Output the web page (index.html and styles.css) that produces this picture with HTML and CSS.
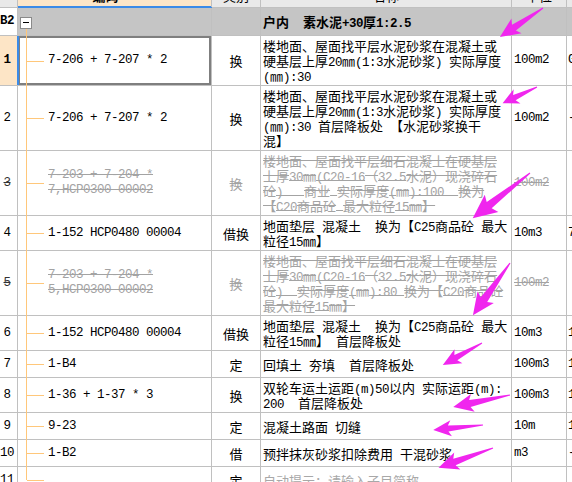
FILE: index.html
```html
<!DOCTYPE html>
<html lang="zh-CN">
<head>
<meta charset="utf-8">
<title>子目列表</title>
<link rel="stylesheet" href="styles.css">
</head>
<body>
<div class="sheet">
  <div class="row head">
    <div class="c num"></div>
    <div class="c code hsel"><div class="t hb">编码</div></div>
    <div class="c type"><div class="t">类别</div></div>
    <div class="c name ctr"><div class="t">名称</div></div>
    <div class="c unit ctr"><div class="t">单位</div></div>
    <div class="c more"></div>
  </div>

  <div class="row grp">
    <div class="c num"><div class="t m b">B2</div></div>
    <div class="c code gcode"><span class="box"></span></div>
    <div class="c type"></div>
    <div class="c name"><div class="t b">户内<span class="a">  </span>素水泥<span class="a">+30</span>厚<span class="a">1:2.5</span></div></div>
    <div class="c unit"></div>
    <div class="c more"></div>
  </div>

  <div class="row">
    <div class="c num selrow"><div class="t m b">1</div></div>
    <div class="c code tree sel"><div class="t m">7-206 + 7-207 * 2</div></div>
    <div class="c type"><div class="t">换</div></div>
    <div class="c name"><div class="t">楼地面、屋面找平层水泥砂浆在混凝土或<br>硬基层上厚<span class="a">20</span>㎜<span class="a">(1:3</span>水泥砂浆<span class="a">) </span>实际厚度<br><span class="a">(</span>㎜<span class="a">):30</span></div></div>
    <div class="c unit"><div class="t m">100m2</div></div>
    <div class="c more"><div class="t m">G</div></div>
  </div>

  <div class="row">
    <div class="c num"><div class="t m">2</div></div>
    <div class="c code tree"><div class="t m">7-206 + 7-207 * 2</div></div>
    <div class="c type"><div class="t">换</div></div>
    <div class="c name"><div class="t">楼地面、屋面找平层水泥砂浆在混凝土或<br>硬基层上厚<span class="a">20</span>㎜<span class="a">(1:3</span>水泥砂浆<span class="a">) </span>实际厚度<br><span class="a">(</span>㎜<span class="a">):30 </span>首层降板处<span class="a"> </span>【水泥砂浆换干<br>混】</div></div>
    <div class="c unit"><div class="t m">100m2</div></div>
    <div class="c more"><div class="t m">-</div></div>
  </div>

  <div class="row">
    <div class="c num"><div class="t m xn">3</div></div>
    <div class="c code tree"><div class="t m x">7-203 + 7-204 *<br>7,HCP0300 00002</div></div>
    <div class="c type"><div class="t x">换</div></div>
    <div class="c name"><div class="t x">楼地面、屋面找平层细石混凝土在硬基层<br>上厚<span class="a">30</span>㎜<span class="a">(C20-16</span>（<span class="a">32.5</span>水泥）现浇碎石<br>砼<span class="a">)   </span>商业<span class="a"> </span>实际厚度<span class="a">(</span>㎜<span class="a">):100  </span>换为<br>【<span class="a">C20</span>商品砼<span class="a"> </span>最大粒径<span class="a">15</span>㎜】</div></div>
    <div class="c unit"><div class="t m x">100m2</div></div>
    <div class="c more"></div>
  </div>

  <div class="row">
    <div class="c num"><div class="t m">4</div></div>
    <div class="c code tree"><div class="t m">1-152 HCP0480 00004</div></div>
    <div class="c type"><div class="t">借换</div></div>
    <div class="c name"><div class="t">地面垫层<span class="a"> </span>混凝土<span class="a">  </span>换为【<span class="a">C25</span>商品砼<span class="a"> </span>最大<br>粒径<span class="a">15</span>㎜】</div></div>
    <div class="c unit"><div class="t m">10m3</div></div>
    <div class="c more"><div class="t m">7</div></div>
  </div>

  <div class="row">
    <div class="c num"><div class="t m xn">5</div></div>
    <div class="c code tree"><div class="t m x">7-203 + 7-204 *<br>5,HCP0300 00002</div></div>
    <div class="c type"><div class="t x">换</div></div>
    <div class="c name"><div class="t x">楼地面、屋面找平层细石混凝土在硬基层<br>上厚<span class="a">30</span>㎜<span class="a">(C20-16</span>（<span class="a">32.5</span>水泥）现浇碎石<br>砼<span class="a">)  </span>实际厚度<span class="a">(</span>㎜<span class="a">):80 </span>换为【<span class="a">C20</span>商品砼<br>最大粒径<span class="a">15</span>㎜】</div></div>
    <div class="c unit"><div class="t m x">100m2</div></div>
    <div class="c more"></div>
  </div>

  <div class="row">
    <div class="c num"><div class="t m">6</div></div>
    <div class="c code tree"><div class="t m">1-152 HCP0480 00004</div></div>
    <div class="c type"><div class="t">借换</div></div>
    <div class="c name"><div class="t">地面垫层<span class="a"> </span>混凝土<span class="a">  </span>换为【<span class="a">C25</span>商品砼<span class="a"> </span>最大<br>粒径<span class="a">15</span>㎜】<span class="a"> </span>首层降板处</div></div>
    <div class="c unit"><div class="t m">10m3</div></div>
    <div class="c more"><div class="t m">1</div></div>
  </div>

  <div class="row">
    <div class="c num"><div class="t m">7</div></div>
    <div class="c code tree"><div class="t m">1-B4</div></div>
    <div class="c type"><div class="t">定</div></div>
    <div class="c name"><div class="t">回填土<span class="a"> </span>夯填<span class="a">  </span>首层降板处</div></div>
    <div class="c unit"><div class="t m">100m3</div></div>
    <div class="c more"><div class="t m">1</div></div>
  </div>

  <div class="row">
    <div class="c num"><div class="t m">8</div></div>
    <div class="c code tree"><div class="t m">1-36 + 1-37 * 3</div></div>
    <div class="c type"><div class="t">换</div></div>
    <div class="c name"><div class="t">双轮车运土运距<span class="a">(m)50</span>以内<span class="a"> </span>实际运距<span class="a">(m):</span><br><span class="a">200  </span>首层降板处</div></div>
    <div class="c unit"><div class="t m">100m3</div></div>
    <div class="c more"><div class="t m">1</div></div>
  </div>

  <div class="row">
    <div class="c num"><div class="t m">9</div></div>
    <div class="c code tree"><div class="t m">9-23</div></div>
    <div class="c type"><div class="t">定</div></div>
    <div class="c name"><div class="t">混凝土路面<span class="a"> </span>切缝</div></div>
    <div class="c unit"><div class="t m">10m</div></div>
    <div class="c more"><div class="t m">1</div></div>
  </div>

  <div class="row">
    <div class="c num"><div class="t m">10</div></div>
    <div class="c code tree"><div class="t m">1-B2</div></div>
    <div class="c type"><div class="t">借</div></div>
    <div class="c name"><div class="t">预拌抹灰砂浆扣除费用<span class="a"> </span>干混砂浆</div></div>
    <div class="c unit"><div class="t m">m3</div></div>
    <div class="c more"><div class="t m">-</div></div>
  </div>

  <div class="row">
    <div class="c num"><div class="t m">11</div></div>
    <div class="c code tree last"><div class="t m"></div></div>
    <div class="c type"><div class="t">定</div></div>
    <div class="c name"><div class="t hint">自动提示：请输入子目简称</div></div>
    <div class="c unit"></div>
    <div class="c more"></div>
  </div>
</div>

<svg class="marks" width="572" height="482" viewBox="0 0 572 482" aria-hidden="true">
  <g fill="#f026ee">
    <polygon transform="translate(543 8) rotate(146)" points="0,-0.6 35,-3.5 32,-9 52,0 32,9 35,3.5 0,0.6"/>
    <polygon transform="translate(537 87) rotate(154.8)" points="0,-0.5 25,-3 22,-8 38,0 22,8 25,3 0,0.5"/>
    <polygon transform="translate(530 173) rotate(141.7)" points="0,-0.6 52,-4 49,-11 73,0 49,11 52,4 0,0.6"/>
    <polygon transform="translate(510 263) rotate(125.4)" points="0,-0.6 45,-4 42,-10 64,0 42,10 45,4 0,0.6"/>
    <polygon transform="translate(482 343) rotate(150.6)" points="0,-0.5 30,-3 27,-8 45,0 27,8 30,3 0,0.5"/>
    <polygon transform="translate(510 395) rotate(168.1)" points="0,-0.6 41,-3.5 38,-9 58,0 38,9 41,3.5 0,0.6"/>
    <polygon transform="translate(483 425) rotate(174.3)" points="0,-0.5 35,-3 32,-8 50,0 32,8 35,3 0,0.5"/>
    <polygon transform="translate(493 448) rotate(160)" points="0,-0.6 41,-3.5 38,-9 58,0 38,9 41,3.5 0,0.6"/>
  </g>
</svg>
</body>
</html>
```

FILE: styles.css
```css
html, body {
  margin: 0;
  padding: 0;
  background: #ffffff;
}

body {
  width: 572px;
  height: 482px;
  overflow: hidden;
  position: relative;
  font-family: "Noto Sans CJK SC", "Noto Sans", sans-serif;
  font-size: 13px;
  line-height: 15px;
  color: #000000;
}

.sheet {
  margin-top: -17px;
  width: 600px;
}

.row {
  display: flex;
  box-sizing: border-box;
  min-height: 27px;
  border-bottom: 1px solid #c0c0c0;
}

.c {
  box-sizing: border-box;
  flex: none;
  display: flex;
  align-items: center;
  padding: 2px 0;
  border-right: 1px solid #c0c0c0;
}

.num {
  width: 18px;
  justify-content: center;
  padding-right: 3px;
}

.code {
  width: 194px;
  padding-left: 30px;
  position: relative;
}

.type {
  width: 49px;
  justify-content: center;
}

.name {
  width: 251px;
  padding-left: 2px;
}

.unit {
  width: 55px;
  padding-left: 2px;
}

.more {
  flex: 1;
  padding-left: 1px;
  border-right: 0;
}

.ctr {
  justify-content: center;
  padding-left: 0;
}

.t {
  white-space: pre;
}

.m {
  font-family: "Liberation Mono", "DejaVu Sans Mono", monospace;
  font-size: 12.5px;
  letter-spacing: -0.5px;
}

.a {
  font-family: "Liberation Mono", "DejaVu Sans Mono", monospace;
  font-size: 12.5px;
  letter-spacing: -0.5px;
  line-height: 10px;
}

.b {
  font-weight: bold;
}

/* header */
.head {
  min-height: 25px;
  background: #e9e9e9;
}

.head .c {
  padding: 0;
}

.head .code {
  padding-left: 0;
  justify-content: center;
}

.hsel {
  background: #fde6c8;
  box-shadow: inset 0 -1px 0 #3b8be8, 0 1px 0 #3b8be8;
}

.hb {
  font-weight: bold;
  padding-right: 18px;
}

/* group row */
.grp {
  min-height: 28px;
}

.grp .c {
  background: #c5c5c5;
}

.grp .num {
  background: #ffffff;
}

.gcode {
  padding-left: 2px;
}

.gcode::before {
  content: "";
  position: absolute;
  left: 8px;
  top: 21px;
  bottom: -1px;
  width: 1px;
  background: #ffc77a;
}

.box {
  position: relative;
  box-sizing: border-box;
  width: 12px;
  height: 12px;
  margin-top: 2px;
  border: 1px solid #8a8a8a;
  background: #ffffff;
}

.box::after {
  content: "";
  position: absolute;
  left: 2px;
  top: 4px;
  width: 6px;
  height: 1px;
  background: #000000;
}

/* tree lines */
.tree::before {
  content: "";
  position: absolute;
  left: 8px;
  top: -1px;
  bottom: -1px;
  width: 1px;
  background: #ffc77a;
}

.tree::after {
  content: "";
  position: absolute;
  left: 9px;
  top: 50%;
  width: 17px;
  height: 1px;
  background: #ffc77a;
}

.tree.last::before {
  bottom: 50%;
}

/* selection */
.selrow {
  background: #fde5c6;
  border-right-color: #3b8be8;
}

.sel {
  box-shadow: inset 1px 0 0 #3b8be8, inset 0 0 0 2px #7f7f7f;
}

/* states */
.x {
  color: #a3a3a3;
  text-decoration: line-through;
}

.xn {
  color: #333333;
  text-decoration: line-through;
}

.hint {
  color: #a8a8a8;
}

.marks {
  position: absolute;
  left: 0;
  top: 0;
  pointer-events: none;
}
```
